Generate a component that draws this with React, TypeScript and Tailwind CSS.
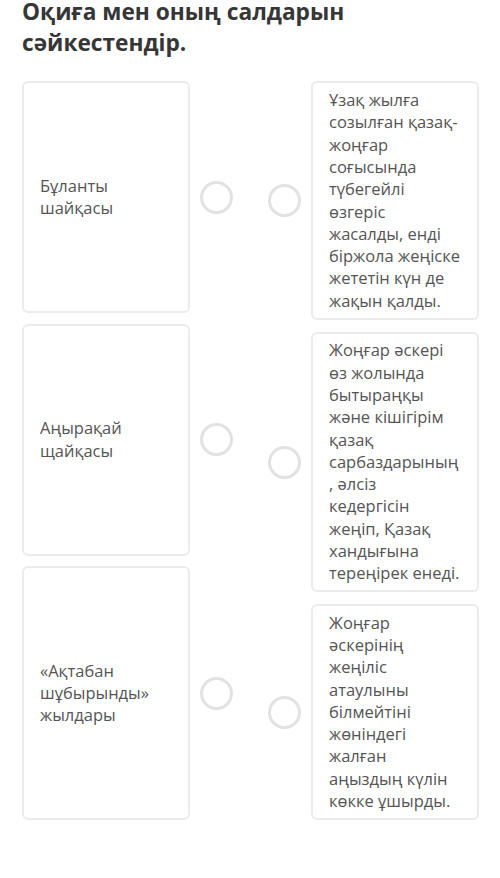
import { FC } from "react"

interface Item {
  text: string
  height: number
}

const events: Item[] = [
  { text: "Бұланты шайқасы", height: 232 },
  { text: "Аңырақай щайқасы", height: 232 },
  { text: "«Ақтабан шұбырынды» жылдары", height: 254 }
]

const outcomes: Item[] = [
  {
    text: "Ұзақ жылға созылған қазақ-жоңғар соғысында түбегейлі өзгеріс жасалды, енді біржола жеңіске жететін күн де жақын қалды.",
    height: 239
  },
  {
    text: "Жоңғар әскері өз жолында бытыраңқы және кішігірім қазақ сарбаздарының, әлсіз кедергісін жеңіп, Қазақ хандығына тереңірек енеді.",
    height: 260
  },
  {
    text: "Жоңғар әскерінің жеңіліс атаулыны білмейтіні жөніндегі жалған аңыздың күлін көкке ұшырды.",
    height: 216
  }
]

const Dot: FC = () => (
  <div className="w-[33px] h-[33px] shrink-0 rounded-full border-[3px] border-[#e2e2e2] bg-white" />
)

const Card: FC<{ item: Item }> = ({ item }) => (
  <div
    className="w-[168px] shrink-0 flex items-center px-4 border-2 border-[#ebebeb] rounded-md bg-white text-[16.5px] leading-[22.3px] text-[#555555] break-words"
    style={{ height: item.height }}
  >
    <div className="w-full">{item.text}</div>
  </div>
)

export default function App() {
  return (
    <div
      className="w-[500px] h-[878px] overflow-hidden bg-white pl-[22px]"
      style={{ fontFamily: '"Open Sans", "Noto Sans", sans-serif' }}
    >
      <h1 className="w-[420px] -mt-[4px] text-[22.7px] leading-[31px] font-bold text-[#363636]">
        Оқиға мен оның салдарын сәйкестендір.
      </h1>

      <div className="flex mt-[23px]">
        {/* left side: events with their handles */}
        <div className="flex flex-col gap-[10.5px]">
          {events.map((item) => (
            <div key={item.text} className="flex items-center gap-[10px]">
              <Card item={item} />
              <Dot />
            </div>
          ))}
        </div>

        {/* right side: consequences */}
        <div className="flex flex-col gap-[12px] ml-[35px]">
          {outcomes.map((item) => (
            <div key={item.text} className="flex items-center gap-[10px]">
              <Dot />
              <Card item={item} />
            </div>
          ))}
        </div>
      </div>
    </div>
  )
}
